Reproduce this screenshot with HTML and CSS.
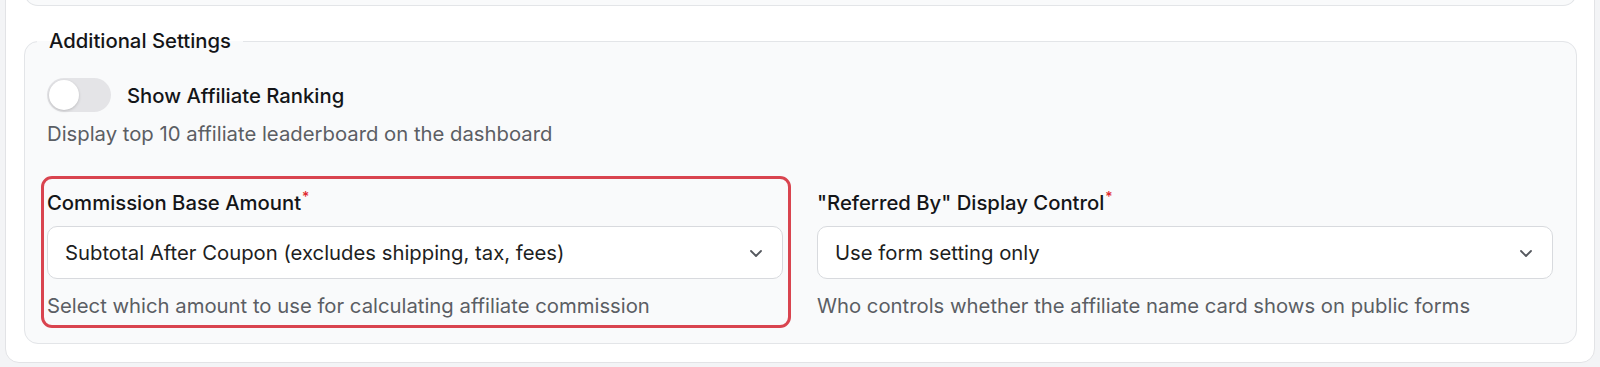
FILE: index.html
```html
<!DOCTYPE html>
<html>
<head>
  <title>Affiliate Settings</title>
  <link rel="stylesheet" href="styles.css">
</head>
<body>
  <div class="card">
    <div class="prev-section"></div>

    <fieldset class="settings-group">
      <legend>Additional Settings</legend>

      <label class="toggle-row">
        <span class="switch"><span class="knob"></span></span>
        <span class="toggle-label">Show Affiliate Ranking</span>
      </label>
      <p class="hint first-hint">Display top 10 affiliate leaderboard on the dashboard</p>

      <div class="fields">
        <div class="field highlighted">
          <div class="field-label">Commission Base Amount<span class="req">*</span></div>
          <div class="select">
            <span>Subtotal After Coupon (excludes shipping, tax, fees)</span>
            <svg class="chevron" width="16" height="16" viewBox="0 0 16 16"><path d="M3 6l5 5 5-5" fill="none" stroke="#55585e" stroke-width="1.8" stroke-linecap="round" stroke-linejoin="round"/></svg>
          </div>
          <p class="hint">Select which amount to use for calculating affiliate commission</p>
        </div>

        <div class="field">
          <div class="field-label">"Referred By" Display Control<span class="req">*</span></div>
          <div class="select">
            <span>Use form setting only</span>
            <svg class="chevron" width="16" height="16" viewBox="0 0 16 16"><path d="M3 6l5 5 5-5" fill="none" stroke="#55585e" stroke-width="1.8" stroke-linecap="round" stroke-linejoin="round"/></svg>
          </div>
          <p class="hint">Who controls whether the affiliate name card shows on public forms</p>
        </div>
      </div>
    </fieldset>
  </div>
</body>
</html>
```

FILE: styles.css
```css
body {
  margin: 0;
  background-color: #f3f4f6;
  font-family: Inter, "Noto Sans", sans-serif;
  color: #1d1e21;
}

.card {
  margin: -60px 5px 0 5px;
  background-color: #fff;
  border: 1px solid #e2e3e6;
  border-radius: 0 0 14px 14px;
  padding: 0 17px 18px 18px;
}

.prev-section {
  height: 64px;
  background-color: #f9fafb;
  border: 1px solid #e3e5e8;
  border-top: none;
  border-radius: 0 0 14px 14px;
}

.settings-group {
  margin: 21px 0 0 0;
  padding: 23px 23px 23px 22px;
  background-color: #f9fafb;
  border: 1px solid #e3e5e8;
  border-radius: 14px;
  min-width: 0;
}

.settings-group legend {
  padding: 0 12px;
  margin-left: -10px;
  font-size: 20.3px;
  line-height: 28px;
  font-weight: 500;
  color: #141518;
}

.toggle-row {
  display: flex;
  align-items: center;
  gap: 16px;
  cursor: pointer;
}

.switch {
  display: flex;
  align-items: center;
  width: 64px;
  height: 34px;
  padding: 2px;
  box-sizing: border-box;
  border-radius: 17px;
  background-color: #e4e4e7;
}

.knob {
  width: 30px;
  height: 30px;
  border-radius: 50%;
  background-color: #fff;
  box-shadow: 0 1px 3px rgba(0, 0, 0, 0.18);
}

.toggle-label {
  font-size: 20.3px;
  line-height: 28px;
  font-weight: 500;
  color: #141518;
  padding-top: 1px;
}

.hint {
  margin: 13px 0 0 0;
  font-size: 20.3px;
  line-height: 28px;
  color: #5b5e64;
}

.first-hint {
  margin-top: 8px;
}

.fields {
  display: grid;
  grid-template-columns: 1fr 1fr;
  gap: 34px;
  margin-top: 35px;
}

.field {
  position: relative;
}

.highlighted::before {
  content: "";
  position: absolute;
  top: -7px;
  left: -6px;
  right: -8px;
  bottom: -8px;
  border: 3px solid #d9444f;
  border-radius: 11px;
  pointer-events: none;
}

.field-label {
  font-size: 20.3px;
  line-height: 28px;
  font-weight: 500;
  color: #141518;
}

.req {
  color: #e0282e;
  font-size: 14px;
  vertical-align: 8px;
  margin-left: 1px;
}

.select {
  display: flex;
  align-items: center;
  justify-content: space-between;
  height: 53px;
  box-sizing: border-box;
  margin-top: 9px;
  padding: 0 18px 0 17px;
  background-color: #fff;
  border: 1px solid #d8dade;
  border-radius: 10px;
  font-size: 20.3px;
  color: #1d1e21;
}
```
